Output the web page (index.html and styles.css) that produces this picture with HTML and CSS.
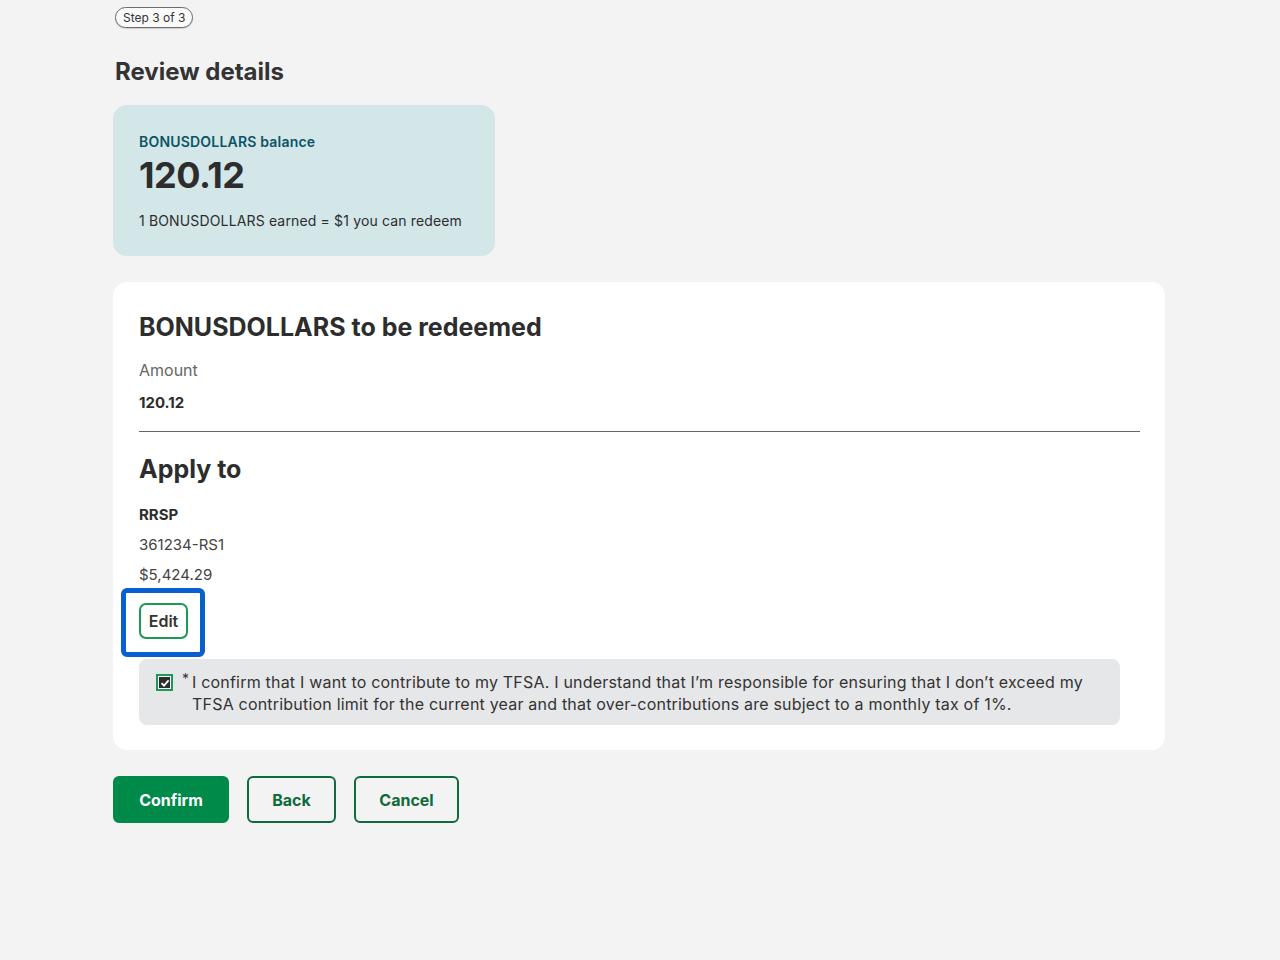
FILE: index.html
```html
<!DOCTYPE html>
<html lang="en">
<head>
<meta charset="utf-8">
<title>Review details</title>
<link rel="stylesheet" href="styles.css">
</head>
<body>
<main class="page">
  <span class="step">Step 3 of 3</span>
  <h1 class="title">Review details</h1>

  <section class="balance">
    <div class="balance-label">BONUSDOLLARS balance</div>
    <div class="balance-value">120.12</div>
    <div class="balance-note">1 BONUSDOLLARS earned = $1 you can redeem</div>
  </section>

  <section class="card">
    <h2 class="card-title">BONUSDOLLARS to be redeemed</h2>
    <div class="field-label">Amount</div>
    <div class="field-value">120.12</div>
    <hr class="divider">
    <h2 class="card-title apply">Apply to</h2>
    <div class="acct-name">RRSP</div>
    <div class="acct-line">361234-RS1</div>
    <div class="acct-line">$5,424.29</div>
    <div class="focus-ring">
      <button class="edit-btn" type="button">Edit</button>
    </div>
    <label class="confirm-box">
      <span class="check">
        <svg width="10" height="10" viewBox="0 0 10 10"><path d="M1.5 5.2 L4 7.6 L8.6 2.4" fill="none" stroke="#fff" stroke-width="1.8"/></svg>
      </span>
      <span class="confirm-text"><span class="star">*</span>I confirm that I want to contribute to my TFSA. I understand that I’m responsible for ensuring that I don’t exceed my TFSA contribution limit for the current year and that over-contributions are subject to a monthly tax of 1%.</span>
    </label>
  </section>

  <div class="actions">
    <button class="btn primary" type="button">Confirm</button>
    <button class="btn outline" type="button">Back</button>
    <button class="btn outline" type="button">Cancel</button>
  </div>
</main>
</body>
</html>
```
FILE: styles.css
```css
* { box-sizing: border-box; }
html, body { margin: 0; padding: 0; }
body {
  background: #f3f3f3;
  font-family: Inter, Lato, "Liberation Sans", sans-serif;
  color: #2d2d2d;
  width: 1280px;
  height: 960px;
}
.page {
  padding: 7px 115px 0 113px;
  display: flex;
  flex-direction: column;
  align-items: flex-start;
}
.step {
  margin-left: 2px;
  display: inline-block;
  font-size: 12px;
  line-height: 19px;
  padding: 0 7px;
  border: 1px solid #6b6b6b;
  border-radius: 11px;
  background: #fafafa;
  color: #333;
  box-shadow: 0 1px 1px rgba(0,0,0,0.15);
}
.title {
  margin: 29px 0 0 2px;
  font-size: 24px;
  line-height: 30px;
  font-weight: 700;
  color: #333;
}
.balance {
  margin-top: 18px;
  width: 382px;
  height: 151px;
  background: #d3e6e8;
  border-radius: 14px;
  padding: 27px 26px 0 26px;
}
.balance-label {
  font-size: 14px;
  line-height: 20px;
  font-weight: 600;
  color: #0c5566;
  letter-spacing: 0.2px;
}
.balance-value {
  font-size: 36px;
  line-height: 44px;
  font-weight: 700;
  color: #2d2d2d;
  margin-top: 1px;
  letter-spacing: -0.5px;
}
.balance-note {
  font-size: 14px;
  line-height: 20px;
  margin-top: 14px;
  color: #2d2d2d;
  letter-spacing: 0.15px;
}
.card {
  margin-top: 26px;
  width: 1052px;
  background: #fff;
  border-radius: 14px;
  padding: 29px 25px 25px 26px;
}
.card-title {
  margin: 0;
  font-size: 25px;
  line-height: 32px;
  font-weight: 700;
  color: #2d2d2d;
}
.field-label {
  margin-top: 15px;
  font-size: 16px;
  line-height: 24px;
  color: #666;
}
.field-value {
  margin-top: 9px;
  font-size: 15px;
  line-height: 24px;
  font-weight: 700;
  color: #2d2d2d;
}
.divider {
  margin: 16px 0 0 0;
  border: 0;
  border-top: 1px solid #666;
}
.apply { margin-top: 21px; }
.acct-name {
  margin-top: 18px;
  font-size: 15px;
  line-height: 24px;
  font-weight: 700;
}
.acct-line {
  margin-top: 6px;
  font-size: 15px;
  line-height: 24px;
  color: #444;
}
.focus-ring {
  margin: 1px 0 0 -18px;
  width: 84px;
  height: 69px;
  border: 5px solid #0a5fcf;
  border-radius: 6px;
  padding: 10px 0 0 13px;
  background: #fff;
}
.edit-btn {
  width: 49px;
  height: 36px;
  border: 2px solid #1a9a55;
  border-radius: 7px;
  background: #fff;
  font-family: inherit;
  font-size: 16px;
  font-weight: 600;
  color: #333;
  padding: 0;
}
.confirm-box {
  margin-top: 2px;
  display: flex;
  align-items: flex-start;
  width: 981px;
  background: #e6e7e8;
  border-radius: 8px;
  padding: 12px 20px 10px 17px;
}
.check {
  flex: none;
  width: 17px;
  height: 17px;
  margin-top: 3px;
  border: 2px solid #1a9a55;
  background: #2d2d2d;
  box-shadow: inset 0 0 0 1px #fff;
  display: flex;
  align-items: center;
  justify-content: center;
}
.confirm-text {
  margin-left: 9px;
  font-size: 16px;
  line-height: 22px;
  letter-spacing: 0.2px;
  color: #333;
  padding-left: 10px;
  position: relative;
}
.star {
  position: absolute;
  left: 0;
  top: -3px;
  font-size: 14px;
}
.actions {
  margin-top: 26px;
  display: flex;
  gap: 18px;
}
.btn {
  height: 47px;
  border-radius: 6px;
  font-family: inherit;
  font-size: 16px;
  font-weight: 700;
  padding: 0;
}
.primary {
  width: 116px;
  background: #008a4a;
  border: 2px solid #008a4a;
  color: #fff;
}
.outline {
  background: transparent;
  border: 2px solid #0f6a3c;
  color: #0f6a3c;
}
.outline:nth-child(2) { width: 89px; }
.outline:nth-child(3) { width: 105px; }
```
